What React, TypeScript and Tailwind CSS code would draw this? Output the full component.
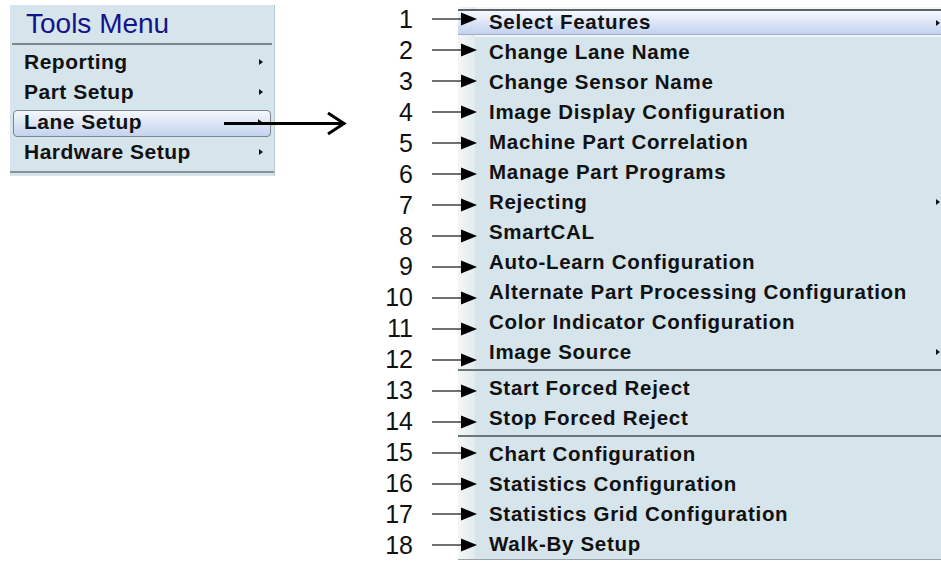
import React from 'react';

const font = { fontFamily: '"Liberation Sans", Arial, sans-serif' };

type Item = { label: string; sub?: boolean };

const groups: Item[][] = [
  [
    { label: 'Select Features', sub: true },
    { label: 'Change Lane Name' },
    { label: 'Change Sensor Name' },
    { label: 'Image Display Configuration' },
    { label: 'Machine Part Correlation' },
    { label: 'Manage Part Programs' },
    { label: 'Rejecting', sub: true },
    { label: 'SmartCAL' },
    { label: 'Auto-Learn Configuration' },
    { label: 'Alternate Part Processing Configuration' },
    { label: 'Color Indicator Configuration' },
    { label: 'Image Source', sub: true },
  ],
  [{ label: 'Start Forced Reject' }, { label: 'Stop Forced Reject' }],
  [
    { label: 'Chart Configuration' },
    { label: 'Statistics Configuration' },
    { label: 'Statistics Grid Configuration' },
    { label: 'Walk-By Setup' },
  ],
];

const Chevron = () => (
  <svg width="4" height="6" viewBox="0 0 4 6" className="shrink-0">
    <path d="M0 0 L4 3 L0 6 Z" fill="#111" />
  </svg>
);

const Pointer = () => (
  <svg width="45" height="16" viewBox="0 0 45 16" className="shrink-0">
    <line x1="0" y1="8" x2="31" y2="8" stroke="#333" strokeWidth="1.4" />
    <path d="M29 1.5 L45 8 L29 14.5 Z" fill="#000" />
  </svg>
);

function LeftMenu() {
  const items = ['Reporting', 'Part Setup', 'Lane Setup', 'Hardware Setup'];
  return (
    <div className="ml-[10px] mt-[5px] w-[265px] shrink-0 self-start bg-[#d6e4ec] border-r border-[#b9c9c6]">
      <div className="h-[38px] pl-[16px] flex items-center text-[28px] leading-none text-[#14148a]">
        Tools Menu
      </div>
      <div className="mx-[2px] h-[2px] bg-[#7b868c]" />
      <div className="pt-[2px]">
        {items.map((it) => {
          const active = it === 'Lane Setup';
          return (
            <div key={it} className="h-[30px] flex flex-col">
              {active ? (
                <div className="mt-[3px] mx-[3px] h-[27px] rounded-[4px] border border-[#7d8590] bg-gradient-to-b from-[#f5f7fc] to-[#c4d3ee] flex items-center pl-[10px] pr-[8px] pb-[3px]">
                  <span className="flex-1 text-[21px] font-bold tracking-[0.5px] text-[#111]">{it}</span>
                  <Chevron />
                </div>
              ) : (
                <div className="h-[30px] flex items-center pl-[14px] pr-[11px]">
                  <span className="flex-1 text-[21px] font-bold tracking-[0.5px] text-[#111]">{it}</span>
                  <Chevron />
                </div>
              )}
            </div>
          );
        })}
      </div>
      <div className="h-[9px] flex flex-col justify-center">
        <div className="h-[2px] bg-[#8a9296]" />
      </div>
    </div>
  );
}

function Annotations() {
  return (
    <div className="relative z-10 ml-[105px] pt-[4px] w-[97px] shrink-0 flex flex-col">
      {Array.from({ length: 18 }, (_, i) => (
        <div key={i} className="h-[31px] flex items-center">
          <span className="w-[33px] text-right text-[25px] leading-none text-[#111]">{i + 1}</span>
          <span className="ml-[19px] flex">
            <Pointer />
          </span>
        </div>
      ))}
    </div>
  );
}

function RightMenu() {
  return (
    <div className="-ml-[19px] mt-[7px] flex-1 self-start flex flex-col border-b border-[#9aa4a8]">
      {groups.map((g, gi) => (
        <React.Fragment key={gi}>
          {gi > 0 && (
            <div className="h-[6px] flex">
              <div className="w-[17px] bg-gradient-to-r from-[#f4f6f6] to-[#e2ebef]" />
              <div className="flex-1 bg-[#d6e4ec]" />
            </div>
          )}
          {gi > 0 && <div className="-mt-[4px] mb-[2px] h-[2px] bg-[#6d767b]" />}
          {g.map((it, ii) => {
            const hl = gi === 0 && ii === 0;
            return (
              <div key={it.label} className="h-[30px] flex">
                <div className="w-[17px] bg-gradient-to-r from-[#f4f6f6] to-[#e2ebef]" />
                <div className={`flex-1 flex flex-col ${hl ? 'bg-[#f1f5f5]' : 'bg-[#d6e4ec]'}`}>
                  {hl ? (
                    <div className="-ml-[17px] mt-[2px] h-[26px] border-t-2 border-b border-t-[#5b6166] border-b-[#9fb0c8] bg-gradient-to-b from-[#f6f8fd] to-[#c3d2ef] flex items-center pl-[31px] pr-[1px]">
                      <span className="flex-1 text-[20.5px] font-bold tracking-[0.7px] text-[#111]">{it.label}</span>
                      <Chevron />
                    </div>
                  ) : (
                    <div className="h-[30px] flex items-center pl-[14px] pr-[1px]">
                      <span className="flex-1 text-[20.5px] font-bold tracking-[0.7px] text-[#111]">{it.label}</span>
                      {it.sub && <Chevron />}
                    </div>
                  )}
                </div>
              </div>
            );
          })}
        </React.Fragment>
      ))}
    </div>
  );
}

export default function App() {
  return (
    <div className="relative w-[941px] h-[561px] bg-white overflow-hidden flex" style={font}>
      <LeftMenu />
      <Annotations />
      <RightMenu />
      <svg className="absolute left-[224px] top-[110px]" width="123" height="28" viewBox="0 0 123 28">
        <line x1="0" y1="13.5" x2="120" y2="13.5" stroke="#000" strokeWidth="3" />
        <path d="M104 3 L120 13.5 L104 24" fill="none" stroke="#000" strokeWidth="3" />
      </svg>
    </div>
  );
}
